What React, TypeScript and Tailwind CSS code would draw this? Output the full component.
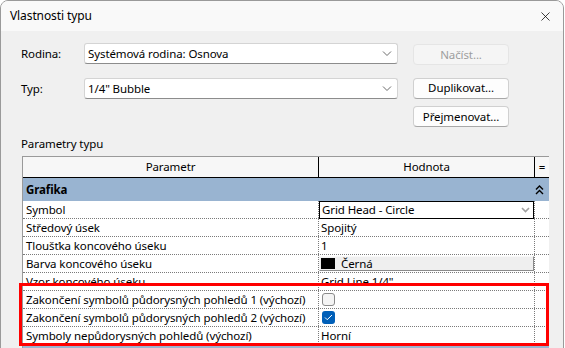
import { X } from 'lucide-react';

const params: { name: string; kind: string; value?: string }[] = [
  { name: 'Symbol', kind: 'combo', value: 'Grid Head - Circle' },
  { name: 'Středový úsek', kind: 'text', value: 'Spojitý' },
  { name: 'Tloušťka koncového úseku', kind: 'text', value: '1' },
  { name: 'Barva koncového úseku', kind: 'color', value: 'Černá' },
  { name: 'Vzor koncového úseku', kind: 'text', value: 'Grid Line 1/4"' },
  { name: 'Zakončení symbolů půdorysných pohledů 1 (výchozí)', kind: 'check' },
  { name: 'Zakončení symbolů půdorysných pohledů 2 (výchozí)', kind: 'checked' },
  { name: 'Symboly nepůdorysných pohledů (výchozí)', kind: 'text', value: 'Horní' },
];

function Combo({ value }: { value: string }) {
  return (
    <div className="flex h-[21px] w-[314px] items-center justify-between rounded-[3px] border border-[#d4d4d4] border-b-[#8c8c8c] bg-white pl-[3px] pr-[5px]">
      <span>{value}</span>
      <svg width="10" height="6" viewBox="0 0 10 6">
        <path d="M1 0.5l4 4 4-4" stroke="#6b6b6b" fill="none" strokeWidth="1" />
      </svg>
    </div>
  );
}

function Button({ label, disabled }: { label: string; disabled?: boolean }) {
  return (
    <div
      className={`flex h-[21px] w-[96px] items-center justify-center rounded-[4px] border ${
        disabled
          ? 'border-[#e5e5e5] bg-[#f5f5f5] text-[#9d9d9d]'
          : 'border-[#d0d0d0] border-b-[#a8a8a8] bg-[#fdfdfd] text-black'
      }`}
    >
      {label}
    </div>
  );
}

function ValueCell({ kind, value }: { kind: string; value?: string }) {
  if (kind === 'combo') {
    return (
      <div className="flex h-[18px] w-full items-center justify-between border border-black pl-[2px] pr-[3px]">
        <span>{value}</span>
        <svg width="9" height="6" viewBox="0 0 9 6">
          <path d="M1 1l3.5 3.5L8 1" stroke="#a0a0a0" fill="none" strokeWidth="1.6" />
        </svg>
      </div>
    );
  }
  if (kind === 'color') {
    return (
      <div className="flex h-[15px] w-full items-center gap-[6px] border border-[#f8f8f8] border-b-[#8a8a8a] border-r-[#8a8a8a] bg-[#efefef] pl-[1px]">
        <div className="h-[11px] w-[14px] bg-black" />
        <span>{value}</span>
      </div>
    );
  }
  if (kind === 'check') {
    return <div className="ml-[3px] h-[13px] w-[13px] rounded-[3px] border border-[#8a8a8a] bg-[#f4f4f4]" />;
  }
  if (kind === 'checked') {
    return (
      <div className="ml-[3px] flex h-[13px] w-[13px] items-center justify-center rounded-[3px] bg-[#005fb8]">
        <svg width="9" height="7" viewBox="0 0 9 7">
          <path d="M1 3.5l2.2 2.2L8 1" stroke="white" fill="none" strokeWidth="1" />
        </svg>
      </div>
    );
  }
  return <span className="pl-[2px]">{value}</span>;
}

export default function App() {
  return (
    <div className="relative h-[348px] w-[565px] overflow-hidden bg-white font-['Noto_Sans',sans-serif] text-[11.5px] tracking-[-0.1px] text-black">
      <div className="flex h-[360px] w-[564px] flex-col overflow-hidden rounded-t-[8px] border border-[#9a9a9a] bg-[#f0f0f0]">
        {/* title bar */}
        <div className="flex h-[30px] shrink-0 items-center justify-between bg-[#f9f9f9] pl-[9px] pr-[10px]">
          <span className="text-[12px]">Vlastnosti typu</span>
          <X className="h-[15px] w-[15px]" strokeWidth={1.2} />
        </div>

        <div className="flex flex-col pl-[20px] pt-[11px]">
          <div className="flex items-center">
            <span className="w-[63px]">Rodina:</span>
            <Combo value="Systémová rodina: Osnova" />
            <div className="ml-[15px] mt-[2px]">
              <Button label="Načíst..." disabled />
            </div>
          </div>
          <div className="mt-[13px] flex items-center">
            <span className="w-[63px]">Typ:</span>
            <Combo value={'1/4" Bubble'} />
            <div className="ml-[15px] -mt-[1px]">
              <Button label="Duplikovat..." />
            </div>
          </div>
          <div className="mt-[7px] flex pl-[392px]">
            <Button label="Přejmenovat..." />
          </div>

          <div className="mt-[10px] leading-[14px]">Parametry typu</div>

          {/* table */}
          <div className="mt-[5px] ml-[1px] w-[527px] border-l border-t border-[#9a9a9a] bg-white">
            <div className="flex h-[21px] border-b border-black bg-[#f7f7f7]">
              <div className="flex w-[296px] items-center justify-center border-r border-black">Parametr</div>
              <div className="flex w-[216px] items-center justify-center border-r border-black">Hodnota</div>
              <div className="flex flex-1 items-center justify-center">=</div>
            </div>
            <div className="flex h-[23px] items-center justify-between bg-[#99b4d1] pl-[3px] pr-[5px]">
              <span className="font-bold">Grafika</span>
              <svg width="9" height="10" viewBox="0 0 9 10">
                <path d="M1 4.5L4.5 1 8 4.5M1 9L4.5 5.5 8 9" stroke="black" fill="none" strokeWidth="1.4" />
              </svg>
            </div>
            {params.map((p) => (
              <div key={p.name} className="flex h-[18px] border-b border-dotted border-[#7a7a7a]">
                <div className="flex w-[296px] items-center overflow-hidden whitespace-nowrap border-r border-dotted border-[#7a7a7a] pl-[3px]">
                  {p.name}
                </div>
                <div className="flex w-[216px] items-center border-r border-dotted border-[#7a7a7a]">
                  <ValueCell kind={p.kind} value={p.value} />
                </div>
                <div className="flex-1" />
              </div>
            ))}
            <div className="h-[20px] bg-[#99b4d1]" />
          </div>
        </div>
      </div>

      {/* highlight */}
      <div className="absolute left-[19px] top-[283px] h-[63px] w-[530px] border-[3px] border-[#ff0000]" />
    </div>
  );
}
